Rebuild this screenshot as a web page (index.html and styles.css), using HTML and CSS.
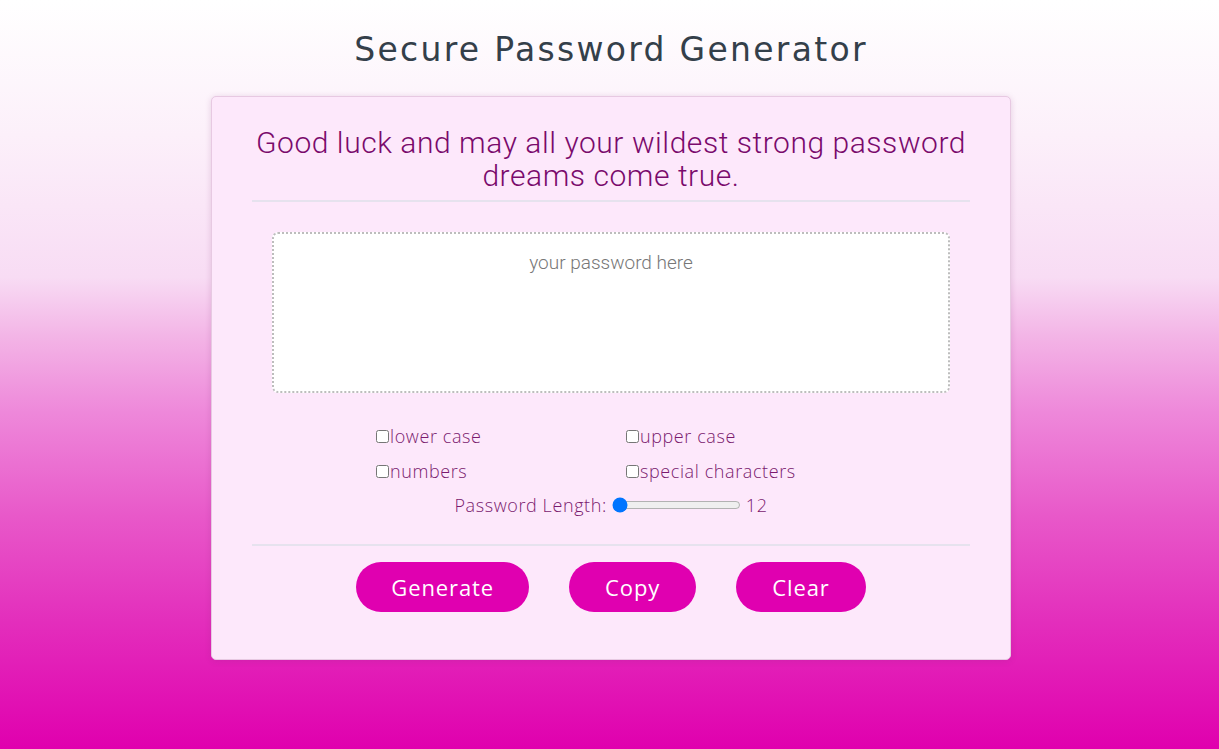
FILE: index.html
```html
<!DOCTYPE html>
<html lang="en">
<head>
<meta charset="utf-8">
<title>Secure Password Generator</title>
<link rel="stylesheet" href="styles.css">
</head>
<body>
  <div class="wrapper">
    <h1 class="title">Secure Password Generator</h1>
    <div class="card">
      <div class="card-header">
        <h2 class="subtitle">Good luck and may all your wildest strong password dreams come true.</h2>
      </div>
      <div class="card-body">
        <textarea class="password" readonly placeholder="your password here"></textarea>
        <div class="options">
          <label class="opt"><input type="checkbox">lower case</label>
          <label class="opt"><input type="checkbox">upper case</label>
          <label class="opt"><input type="checkbox">numbers</label>
          <label class="opt"><input type="checkbox">special characters</label>
        </div>
        <div class="length">
          <span>Password Length:</span>
          <input type="range" min="12" max="128" value="12">
          <span class="len-val">12</span>
        </div>
      </div>
      <div class="card-footer">
        <button class="btn">Generate</button>
        <button class="btn btn-sm">Copy</button>
        <button class="btn btn-sm">Clear</button>
      </div>
    </div>
  </div>
</body>
</html>
```

FILE: styles.css
```css
html, body {
  margin: 0;
  padding: 0;
  height: 100%;
}
body {
  background: linear-gradient(180deg, #ffffff 0%, #fcf0fa 18%, #f8dcf4 37%, #f3b4e6 45%, #ee88da 55%, #e858c9 69%, #e32ebc 83%, #e000ae 100%);
  font-family: "Open Sans", sans-serif;
}
.wrapper {
  display: flex;
  flex-direction: column;
  align-items: center;
  padding-left: 3px;
}
.title {
  margin: 28px 0 24px;
  font-family: "DejaVu Sans", sans-serif;
  font-weight: 400;
  font-size: 33px;
  line-height: 44px;
  color: #343f4a;
  letter-spacing: 2.3px;
}
.card {
  width: 800px;
  box-sizing: border-box;
  background: #fde8fb;
  border: 1px solid #e7c9e2;
  border-radius: 5px;
  box-shadow: 0 1px 6px rgba(120, 40, 110, 0.18);
  padding: 29px 40px 47px;
}
.card-header {
  border-bottom: 2px solid #e6e2ee;
  padding-bottom: 8px;
}
.subtitle {
  margin: 0;
  text-align: center;
  font-family: "Roboto", sans-serif;
  font-weight: 300;
  font-size: 30px;
  line-height: 33px;
  letter-spacing: 0.55px;
  color: #7a0a6c;
}
.card-body {
  padding: 30px 20px 27px;
  border-bottom: 2px solid #e6e2ee;
}
.password {
  display: block;
  width: 100%;
  height: 161px;
  box-sizing: border-box;
  border: 2px dotted #bdbdbd;
  border-radius: 6px;
  background: #fff;
  resize: none;
  text-align: center;
  font-family: "Roboto", sans-serif;
  font-weight: 300;
  font-size: 19px;
  padding: 17px 18px;
  color: #555;
}
.password::placeholder {
  color: #777;
}
.options {
  display: grid;
  grid-template-columns: 250px 250px;
  row-gap: 13px;
  margin: 32px 0 0 104px;
}
.opt {
  display: flex;
  align-items: center;
  font-family: "Open Sans", sans-serif;
  font-weight: 300;
  font-size: 18px;
  line-height: 22px;
  letter-spacing: 0.6px;
  color: #7a1a6e;
}
.opt input {
  margin: 0 1px 0 0;
  width: 13px;
  height: 13px;
}
.length {
  display: flex;
  justify-content: center;
  align-items: center;
  margin-top: 11px;
  font-family: "Open Sans", sans-serif;
  font-weight: 300;
  font-size: 18px;
  letter-spacing: 0.6px;
  color: #7a1a6e;
}
.length input {
  margin: 0 5px;
  width: 129px;
}
.card-footer {
  display: flex;
  justify-content: center;
  gap: 40px;
  padding-top: 16px;
}
.btn {
  height: 50px;
  border: none;
  border-radius: 25px;
  background: #e000b0;
  color: #fff;
  font-family: "Open Sans", sans-serif;
  font-size: 22px;
  letter-spacing: 0.9px;
  padding: 0 35px;
}
.btn-sm {
  padding: 0 36px;
}
```
